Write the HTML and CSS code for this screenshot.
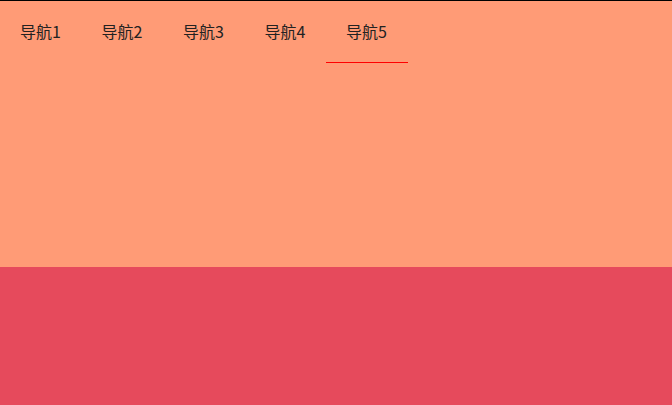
FILE: index.html
```html
<!DOCTYPE html>
<html lang="zh">
<head>
<meta charset="utf-8">
<title>导航</title>
<link rel="stylesheet" href="styles.css">
</head>
<body>
<div class="top">
  <ul class="nav">
    <li class="nav-item">导航1</li>
    <li class="nav-item">导航2</li>
    <li class="nav-item">导航3</li>
    <li class="nav-item">导航4</li>
    <li class="nav-item active">导航5</li>
  </ul>
</div>
<div class="bottom"></div>
</body>
</html>
```

FILE: styles.css
```css
html, body {
  margin: 0;
  padding: 0;
}
body {
  font-family: "Noto Sans CJK SC", "Noto Sans", sans-serif;
  background: #e64a5c;
}
.top {
  height: 266px;
  background: #ff9b76;
  border-top: 1px solid #000;
}
.nav {
  list-style: none;
  margin: 0;
  padding: 0;
  display: flex;
}
.nav-item {
  height: 61px;
  line-height: 61px;
  padding: 0 20px;
  font-size: 16px;
  color: #222;
  border-bottom: 1px solid transparent;
  width: 41.5px;
  white-space: nowrap;
}
.nav-item.active {
  border-bottom-color: #ff0000;
}
.bottom {
  height: 138px;
  background: #e64a5c;
}
```
